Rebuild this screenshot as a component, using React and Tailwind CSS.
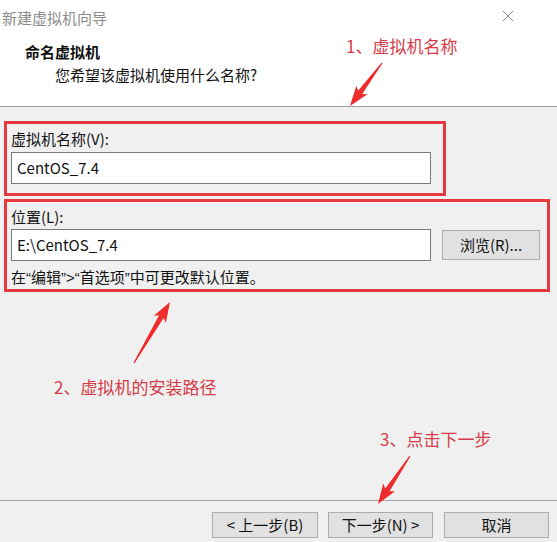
import React from 'react';

const FONT = { fontFamily: '"Microsoft YaHei", "Noto Sans CJK SC", "Noto Sans", sans-serif' };

// tapered annotation arrow, tail -> tip
function arrowPoints([tx, ty], [px, py]) {
  const dx = px - tx, dy = py - ty;
  const len = Math.hypot(dx, dy);
  const ux = dx / len, uy = dy / len;
  const nx = -uy, ny = ux;
  const headLen = 17, headW = 7, shaftW = 2.6;
  const bx = px - ux * headLen, by = py - uy * headLen;
  const pts = [
    [tx + nx * 0.6, ty + ny * 0.6],
    [bx + nx * shaftW, by + ny * shaftW],
    [bx + nx * headW - ux * 3, by + ny * headW - uy * 3],
    [px, py],
    [bx - nx * headW - ux * 3, by - ny * headW - uy * 3],
    [bx - nx * shaftW, by - ny * shaftW],
    [tx - nx * 0.6, ty - ny * 0.6],
  ];
  return pts.map((p) => p.join(',')).join(' ');
}

const arrows = [
  [[382, 63], [350, 106]],
  [[134, 363], [170, 302]],
  [[410, 456], [378, 504]],
];

function Btn({ children, className = '' }) {
  return (
    <button
      type="button"
      className={`h-[26px] bg-[#e1e1e1] border border-[#adadad] text-[15px] text-[#111] flex items-center justify-center ${className}`}
    >
      {children}
    </button>
  );
}

// narrow latin quote marks, as the dialog font draws them
const Q = ({ children }) => <span className="font-['Liberation_Sans']">{children}</span>;

export default function App() {
  return (
    <div className="relative w-[557px] h-[542px] bg-[#f0f0f0] flex flex-col overflow-hidden text-[#111]" style={FONT}>
      {/* header */}
      <div className="bg-white h-[107px] border-b border-[#a0a0a0] flex flex-col shrink-0">
        <div className="h-[34px] flex items-center justify-between pl-[2px] pr-[43px]">
          <span className="text-[15px] text-[#8c8c8c] leading-none">新建虚拟机向导</span>
          <svg width="12" height="12" viewBox="0 0 12 12" className="mt-[-2px]">
            <path d="M1 1 L11 11 M11 1 L1 11" stroke="#8a8a8a" strokeWidth="1" />
          </svg>
        </div>
        <div className="pl-[25px] pt-[8px] text-[15px] font-bold leading-[20px]">命名虚拟机</div>
        <div className="pl-[55px] pt-[3px] text-[15px] leading-[20px]">您希望该虚拟机使用什么名称?</div>
      </div>

      {/* body */}
      <div className="flex-1 flex flex-col pt-[14px]">
        <div className="ml-[4px] w-[442px] h-[75px] border-[3px] border-[#e6383f] pl-[4px] pt-[5px] flex flex-col">
          <div className="text-[15px] leading-[20px]">虚拟机名称(V):</div>
          <div className="mt-[3px] w-[420px] h-[32px] bg-white border border-[#7a7a7a] px-[5px] flex items-center text-[15px]">
            CentOS_7.4
          </div>
        </div>

        <div className="ml-[4px] mt-[3px] w-[546px] h-[93px] border-[3px] border-[#e6383f] pl-[4px] pt-[5px] flex flex-col">
          <div className="text-[15px] leading-[20px]">位置(L):</div>
          <div className="mt-[2px] flex items-center gap-[11px]">
            <div className="w-[420px] h-[32px] bg-white border border-[#7a7a7a] px-[5px] flex items-center text-[15px]">
              E:\CentOS_7.4
            </div>
            <Btn className="w-[98px] h-[30px]">浏览(R)...</Btn>
          </div>
          <div className="mt-[6px] text-[15px] leading-[20px]">
            在<Q>“</Q>编辑<Q>”&gt;“</Q>首选项<Q>”</Q>中可更改默认位置。
          </div>
        </div>
      </div>

      {/* footer */}
      <div className="h-[42px] border-t border-[#a0a0a0] shrink-0 flex items-start pt-[11px] pl-[212px] gap-[10px]">
        <Btn className="w-[106px]">&lt; 上一步(B)</Btn>
        <Btn className="w-[105px]">下一步(N) &gt;</Btn>
        <Btn className="w-[105px] ml-[1px]">取消</Btn>
      </div>

      {/* annotations */}
      <span className="absolute left-[346px] top-[35px] text-[17px] leading-[22px] text-[#d43c48]">1、虚拟机名称</span>
      <span className="absolute left-[54px] top-[376px] text-[17px] leading-[22px] text-[#d43c48]">2、虚拟机的安装路径</span>
      <span className="absolute left-[380px] top-[428px] text-[17px] leading-[22px] text-[#d43c48]">3、点击下一步</span>
      <svg className="absolute inset-0 pointer-events-none" width="557" height="542">
        {arrows.map(([t, p], i) => (
          <polygon key={i} points={arrowPoints(t, p)} fill="#f02b2b" />
        ))}
      </svg>
    </div>
  );
}
